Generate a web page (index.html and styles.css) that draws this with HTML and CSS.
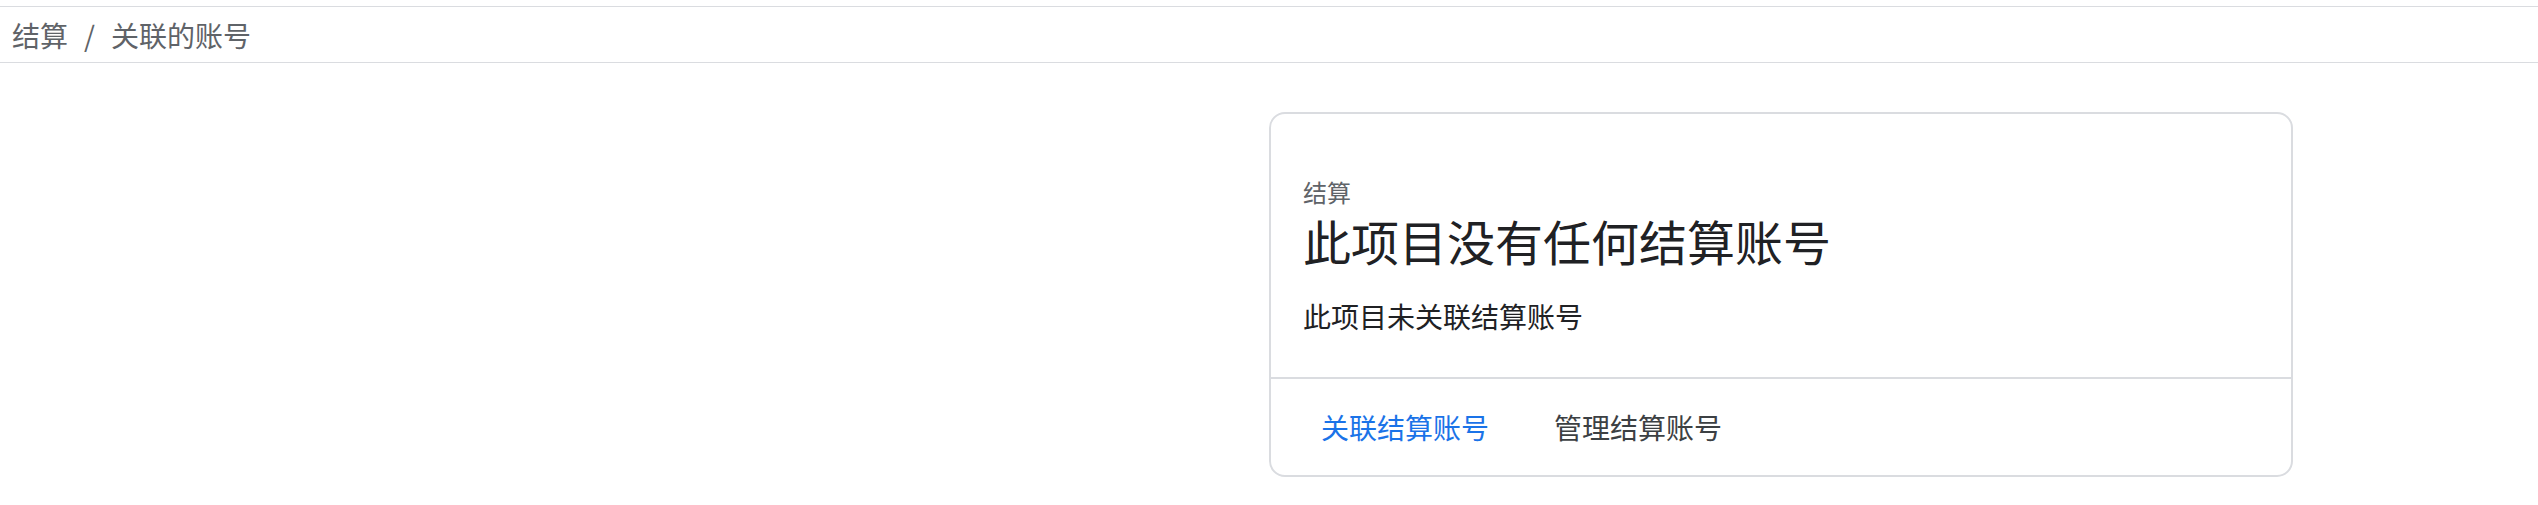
FILE: index.html
```html
<!DOCTYPE html>
<html lang="zh-CN">
<head>
<meta charset="utf-8">
<title>关联的账号</title>
<link rel="stylesheet" href="styles.css">
</head>
<body>
  <nav class="breadcrumb">
    <span class="crumb">结算</span>
    <span class="sep">/</span>
    <span class="crumb">关联的账号</span>
  </nav>
  <main class="main">
    <section class="card">
      <div class="card-body">
        <div class="eyebrow">结算</div>
        <h1 class="title">此项目没有任何结算账号</h1>
        <p class="desc">此项目未关联结算账号</p>
      </div>
      <div class="card-actions">
        <button class="btn btn-primary">关联结算账号</button>
        <button class="btn btn-plain">管理结算账号</button>
      </div>
    </section>
  </main>
</body>
</html>
```

FILE: styles.css
```css
html, body {
  margin: 0;
  padding: 0;
  background: #ffffff;
}

body {
  font-family: "Noto Sans CJK SC", "Noto Sans", sans-serif;
  color: #202124;
  padding-top: 6px;
}

.breadcrumb {
  display: flex;
  align-items: center;
  height: 55px;
  border-top: 1px solid #dadce0;
  border-bottom: 1px solid #dadce0;
  padding-left: 12px;
  font-size: 28px;
  line-height: 40px;
  color: #5f6368;
}

.sep {
  margin: 0 16px;
}

.main {
  display: flex;
  justify-content: flex-end;
  padding: 49px 245px 0 0;
}

.card {
  width: 1024px;
  box-sizing: border-box;
  border: 2px solid #dadce0;
  border-radius: 16px;
  background: #fff;
}

.card-body {
  padding: 62px 32px 41px 32px;
  border-bottom: 2px solid #dadce0;
}

.eyebrow {
  font-size: 24px;
  line-height: 32px;
  color: #5f6368;
}

.title {
  margin: 0;
  font-size: 48px;
  line-height: 64px;
  font-weight: 400;
  color: #202124;
}

.desc {
  margin: 24px 0 0 0;
  font-size: 28px;
  line-height: 40px;
  color: #202124;
}

.card-actions {
  display: flex;
  align-items: center;
  gap: 33px;
  height: 96px;
  padding: 0 34px;
}

.btn {
  font-family: inherit;
  font-size: 28px;
  line-height: 40px;
  background: none;
  border: none;
  padding: 0 16px;
  margin: 0;
  cursor: pointer;
}

.btn-primary {
  color: #1a73e8;
}

.btn-plain {
  color: #3c4043;
}
```
